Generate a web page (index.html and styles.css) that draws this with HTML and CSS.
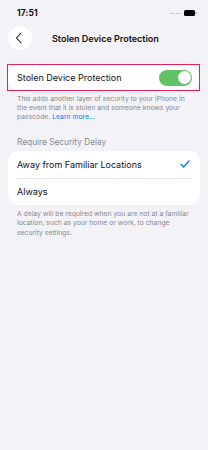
FILE: index.html
```html
<!DOCTYPE html>
<html lang="en">
<head>
<meta charset="utf-8">
<title>Stolen Device Protection</title>
<link rel="stylesheet" href="styles.css">
</head>
<body>
<div class="screen">
  <div class="status">
    <span class="time">17:51</span>
    <div class="status-right">
      <span class="signal"></span>
      <svg class="battery" width="13" height="6" viewBox="0 0 13 6"><rect x="0" y="0" width="11" height="6" rx="1.5" fill="#000"/><rect x="11.5" y="2" width="1.2" height="2" rx="0.5" fill="#999"/></svg>
    </div>
  </div>
  <div class="nav">
    <div class="back">
      <svg width="8" height="12" viewBox="0 0 8 12"><path d="M6 1 L1.5 6 L6 11" fill="none" stroke="#111" stroke-width="1.1" stroke-linecap="round" stroke-linejoin="round"/></svg>
    </div>
    <div class="title">Stolen Device Protection</div>
  </div>

  <div class="highlight">
    <div class="card">
      <div class="row row-main">
        <span class="label">Stolen Device Protection</span>
        <span class="toggle"><span class="knob"></span></span>
      </div>
    </div>
  </div>
  <p class="footer">This adds another layer of security to your iPhone in the event that it is stolen and someone knows your passcode. <span class="link">Learn more...</span></p>

  <div class="section-head">Require Security Delay</div>
  <div class="card card-list">
    <div class="row">
      <span class="label">Away from Familiar Locations</span>
      <svg class="check" width="10" height="8" viewBox="0 0 10 8"><path d="M1 4.3 L3.6 7 L9 1" fill="none" stroke="#0a7aff" stroke-width="1.4" stroke-linecap="round" stroke-linejoin="round"/></svg>
    </div>
    <div class="sep"></div>
    <div class="row">
      <span class="label">Always</span>
    </div>
  </div>
  <p class="footer footer-2">A delay will be required when you are not at a familiar location, such as your home or work, to change security settings.</p>
</div>
</body>
</html>
```
FILE: styles.css
```css
html, body {
  margin: 0;
  padding: 0;
  background: #f2f2f7;
}
body {
  font-family: Inter, "Noto Sans", "Liberation Sans", sans-serif;
  color: #111;
}
.screen {
  width: 208px;
  height: 450px;
  background: #f2f2f7;
  overflow: hidden;
}
.status {
  height: 26px;
  display: flex;
  align-items: center;
  justify-content: space-between;
  padding: 0 11px 0 17px;
  box-sizing: border-box;
}
.time {
  font-size: 8.5px;
  font-weight: 700;
  letter-spacing: 0.1px;
}
.status-right {
  display: flex;
  align-items: center;
  gap: 3px;
}
.signal {
  width: 10px;
  height: 0;
  border-top: 1px dotted #b0b0b5;
  margin-top: 1px;
}
.nav {
  height: 24px;
  display: flex;
  align-items: center;
  padding-left: 8px;
}
.back {
  width: 24px;
  height: 24px;
  border-radius: 50%;
  background: #fff;
  display: flex;
  align-items: center;
  justify-content: center;
}
.back svg { margin-left: -2px; }
.title {
  margin-left: 20px;
  font-size: 9px;
  font-weight: 600;
}
.highlight {
  margin: 14px 8px 0 7px;
  border: 1px solid #e3245a;
}
.card {
  background: #fff;
  border-radius: 10px;
}
.row {
  height: 27px;
  display: flex;
  align-items: center;
  justify-content: space-between;
  padding: 0 8px 0 9px;
}
.row-main {
  height: 25px;
  padding: 0 7px 0 9px;
}
.label {
  font-size: 9px;
}
.toggle {
  width: 33px;
  height: 16px;
  border-radius: 8px;
  background: #62c266;
  display: flex;
  align-items: center;
  justify-content: flex-end;
  padding: 0 1.5px;
  box-sizing: border-box;
}
.knob {
  width: 13px;
  height: 13px;
  border-radius: 50%;
  background: #fff;
}
.footer {
  margin: 3px 18px 0 17px;
  font-size: 6.8px;
  line-height: 9.2px;
  color: #8a8a8e;
}
.link { color: #0a7aff; }
.section-head {
  margin: 15px 0 0 17px;
  font-size: 8.3px;
  color: #8a8a8e;
  line-height: 10px;
}
.card-list {
  margin: 4px 8px 0 8px;
  border-radius: 11px;
}
.card-list .row { padding: 0 10px 0 9px; }
.sep {
  height: 0.6px;
  background: #e3e3e8;
  margin: 0 8px 0 9px;
}
.check { display: block; }
.footer-2 { margin-top: 4px; }
```
